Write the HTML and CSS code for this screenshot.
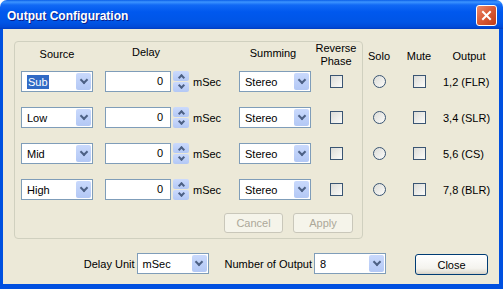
FILE: index.html
```html
<!DOCTYPE html>
<html lang="en">
<head>
    <meta charset="UTF-8">
    <meta name="viewport" content="width=device-width, initial-scale=1.0">
    <title>Output Configuration</title>
    <link rel="stylesheet" href="styles.css">
</head>
<body>
    <div class="window">
        <div class="titlebar">
            <span class="title">Output Configuration</span>
            <div class="close-x">
                <svg width="11" height="11" viewBox="0 0 11 11"><path d="M2 2 L9 9 M9 2 L2 9" stroke="#fff" stroke-width="2" stroke-linecap="square"/></svg>
            </div>
        </div>

        <div class="client">
            <div class="top">
                <!-- channel settings group -->
                <div class="group">
                    <div class="row head">
                        <div class="h-source">Source</div>
                        <div class="h-delay">Delay</div>
                        <div class="h-summing">Summing</div>
                        <div class="h-reverse">Reverse<br>Phase</div>
                    </div>
                    <div class="row">
                        <div class="combo"><span><span class="sel">Sub</span></span><span class="drop"></span></div>
                        <div class="delay"><div class="edit">0</div><div class="spin"><span class="up"></span><span class="down"></span></div><span class="unit">mSec</span></div>
                        <div class="combo"><span>Stereo</span><span class="drop"></span></div>
                        <div class="check"></div>
                    </div>
                    <div class="row">
                        <div class="combo"><span>Low</span><span class="drop"></span></div>
                        <div class="delay"><div class="edit">0</div><div class="spin"><span class="up"></span><span class="down"></span></div><span class="unit">mSec</span></div>
                        <div class="combo"><span>Stereo</span><span class="drop"></span></div>
                        <div class="check"></div>
                    </div>
                    <div class="row">
                        <div class="combo"><span>Mid</span><span class="drop"></span></div>
                        <div class="delay"><div class="edit">0</div><div class="spin"><span class="up"></span><span class="down"></span></div><span class="unit">mSec</span></div>
                        <div class="combo"><span>Stereo</span><span class="drop"></span></div>
                        <div class="check"></div>
                    </div>
                    <div class="row">
                        <div class="combo"><span>High</span><span class="drop"></span></div>
                        <div class="delay"><div class="edit">0</div><div class="spin"><span class="up"></span><span class="down"></span></div><span class="unit">mSec</span></div>
                        <div class="combo"><span>Stereo</span><span class="drop"></span></div>
                        <div class="check"></div>
                    </div>
                    <div class="actions">
                        <div class="btn disabled cancel">Cancel</div>
                        <div class="btn disabled apply">Apply</div>
                    </div>
                </div>

                <!-- per output switches -->
                <div class="side">
                    <div class="row head">
                        <div>Solo</div>
                        <div>Mute</div>
                        <div>Output</div>
                    </div>
                    <div class="row">
                        <div class="radio"></div>
                        <div class="check"></div>
                        <div class="out">1,2 (FLR)</div>
                    </div>
                    <div class="row">
                        <div class="radio"></div>
                        <div class="check"></div>
                        <div class="out">3,4 (SLR)</div>
                    </div>
                    <div class="row">
                        <div class="radio"></div>
                        <div class="check"></div>
                        <div class="out">5,6 (CS)</div>
                    </div>
                    <div class="row">
                        <div class="radio"></div>
                        <div class="check"></div>
                        <div class="out">7,8 (BLR)</div>
                    </div>
                </div>
            </div>

            <div class="bottom">
                <div class="field unit-field">
                    <span>Delay Unit</span>
                    <div class="combo"><span>mSec</span><span class="drop"></span></div>
                </div>
                <div class="field count-field">
                    <span>Number of Output</span>
                    <div class="combo"><span>8</span><span class="drop"></span></div>
                </div>
                <div class="btn close">Close</div>
            </div>
        </div>
    </div>
</body>
</html>
```

FILE: styles.css
```css
html, body {
    margin: 0;
}

body {
    font-family: "Liberation Sans", Arial, sans-serif;
    font-size: 11px;
    color: #000;
    background: #fff;
}

.window {
    width: 503px;
    height: 289px;
    display: flex;
    flex-direction: column;
}

.titlebar {
    height: 29px;
    flex: none;
    display: flex;
    justify-content: space-between;
    align-items: flex-start;
    border-radius: 7px 7px 0 0;
    background: linear-gradient(to bottom, #0a5ee8 0, #3d95ff 2px, #1169f5 5px, #0058ee 12px, #0055e6 22px, #004ad8 27px, #003cc0 29px);
}

.title {
    padding: 4px 0 0 7px;
    line-height: 25px;
    font-size: 12px;
    font-weight: bold;
    color: #fff;
    text-shadow: 1px 1px 0 #0a1e8a;
}

.close-x {
    width: 21px;
    height: 21px;
    margin: 5px 6px 0 0;
    box-sizing: border-box;
    border: 1px solid #fff;
    border-radius: 3px;
    background: linear-gradient(135deg, #ec8a6c 0, #d95a36 50%, #c13c18 100%);
    display: flex;
    align-items: center;
    justify-content: center;
}

.client {
    flex: 1;
    background: #ece9d8;
    border: solid #0050e0;
    border-width: 0 4px 5px 3px;
}

.top {
    display: flex;
    align-items: flex-start;
    padding: 12px 0 0 11px;
}

.group {
    width: 349px;
    height: 198px;
    box-sizing: border-box;
    border: 1px solid #d0d0bf;
    border-radius: 4px;
    padding-left: 6px;
}

.row {
    display: grid;
    grid-template-columns: 84px 134px 75px 44px;
    align-items: center;
    height: 21px;
    margin-top: 15px;
}

.row.head {
    height: 29px;
    margin-top: 0;
    align-items: start;
    line-height: 13px;
}

.row.head + .row {
    margin-top: 0;
}

.h-source {
    width: 72px;
    text-align: center;
    padding-top: 6px;
}

.h-delay {
    padding: 4px 0 0 27px;
}

.h-summing {
    width: 68px;
    text-align: center;
    padding-top: 5px;
}

.h-reverse {
    text-align: center;
}

.side {
    padding-top: 1px;
}

.side .row {
    grid-template-columns: 32px 48px 52px;
}

.side .head div {
    text-align: center;
    padding-top: 8px;
}

.combo {
    width: 72px;
    height: 21px;
    box-sizing: border-box;
    border: 1px solid #7f9db9;
    background: #fff;
    display: flex;
    align-items: center;
    justify-content: space-between;
    padding-left: 5px;
}

.sel {
    background: #316ac5;
    color: #fff;
    padding: 1px 1px;
}

.drop {
    width: 15px;
    height: 17px;
    margin-right: 1px;
    border-radius: 2px;
    background: linear-gradient(to bottom, #c9d9fc, #b3c8f5);
    display: flex;
    align-items: center;
    justify-content: center;
}

.drop::after {
    content: "";
    width: 4px;
    height: 4px;
    margin-top: -3px;
    border: solid #4d6185;
    border-width: 0 2px 2px 0;
    transform: rotate(45deg);
}

.delay {
    display: flex;
    align-items: center;
}

.edit {
    width: 66px;
    height: 21px;
    box-sizing: border-box;
    border: 1px solid #7f9db9;
    background: #fff;
    text-align: right;
    padding-right: 7px;
    line-height: 19px;
}

.spin {
    width: 16px;
    height: 21px;
    margin-left: 2px;
    display: flex;
    flex-direction: column;
    gap: 1px;
}

.spin span {
    flex: 1;
    border-radius: 2px;
    background: linear-gradient(to bottom, #cbdafc, #b3c8f5);
    display: flex;
    align-items: center;
    justify-content: center;
}

.spin span::after {
    content: "";
    width: 3px;
    height: 3px;
    border: solid #4d6185;
    border-width: 0 2px 2px 0;
}

.spin .up::after {
    transform: rotate(-135deg);
    margin-top: 3px;
}

.spin .down::after {
    transform: rotate(45deg);
    margin-top: -3px;
}

.unit {
    margin-left: 4px;
}

.check {
    width: 13px;
    height: 13px;
    box-sizing: border-box;
    border: 1px solid #3a5573;
    background: linear-gradient(135deg, #dcdcd7, #fbfbf9);
    justify-self: center;
}

.radio {
    width: 13px;
    height: 13px;
    box-sizing: border-box;
    border: 1px solid #3a5573;
    border-radius: 50%;
    background: linear-gradient(135deg, #dcdcd7, #fbfbf9);
    justify-self: center;
}

.out {
    white-space: nowrap;
}

.actions {
    display: flex;
    justify-content: flex-end;
    gap: 10px;
    margin-top: 13px;
    padding-right: 9px;
}

.btn {
    height: 20px;
    box-sizing: border-box;
    border-radius: 3px;
    display: flex;
    align-items: center;
    justify-content: center;
}

.btn.disabled {
    border: 1px solid #c9c7ba;
    background: #f5f4ea;
    color: #aca899;
}

.cancel {
    width: 59px;
}

.apply {
    width: 60px;
}

.bottom {
    display: flex;
    justify-content: flex-end;
    align-items: center;
    margin-top: 13px;
    padding-right: 11px;
}

.field {
    display: flex;
    align-items: center;
    gap: 2px;
}

.unit-field {
    margin-right: 16px;
}

.count-field {
    margin-right: 29px;
}

.btn.close {
    width: 73px;
    height: 21px;
    margin-top: 2px;
    border: 1px solid #003c74;
    background: linear-gradient(to bottom, #ffffff 0, #f4f3ee 70%, #e3e0d6 90%, #d6d0c5 100%);
}
```
